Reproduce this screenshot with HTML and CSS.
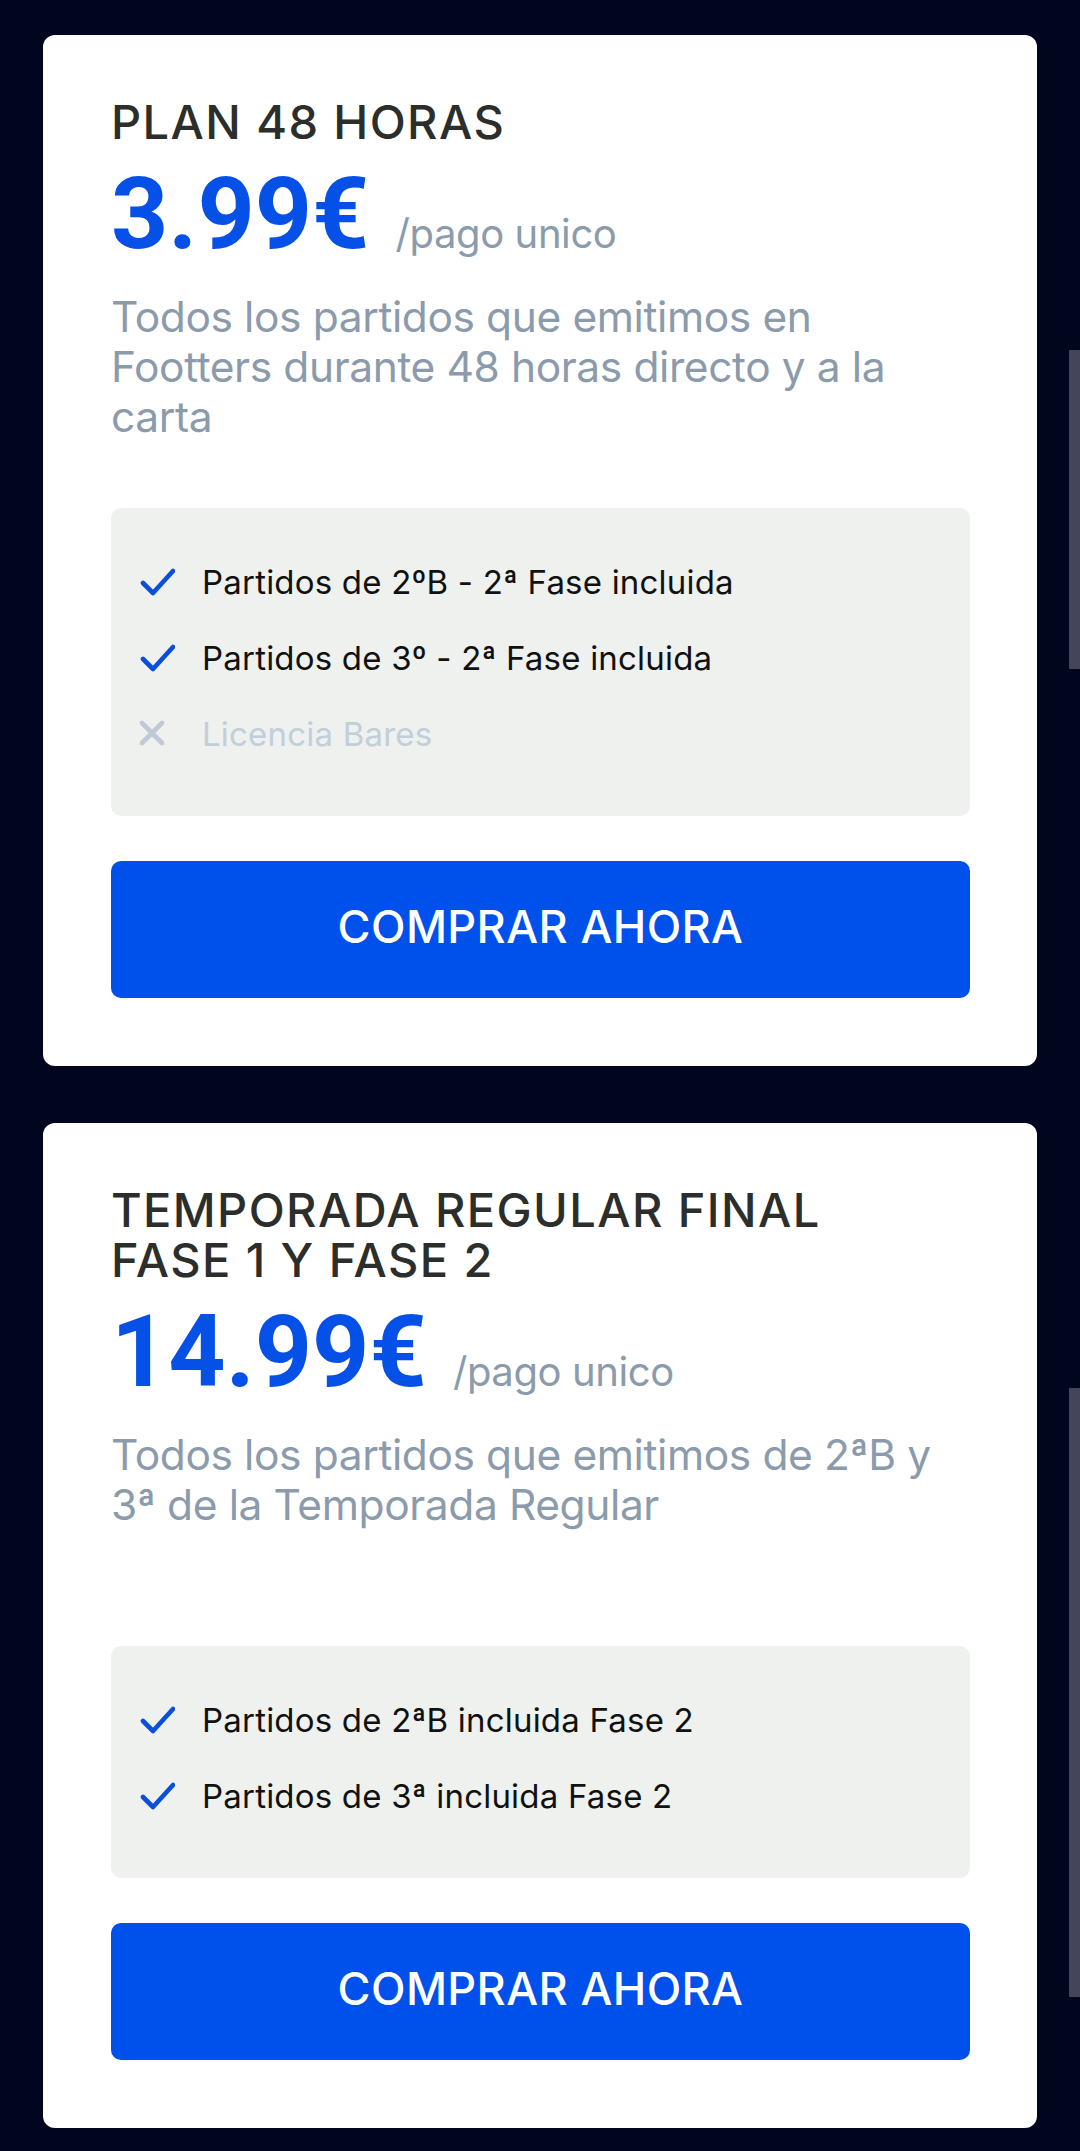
FILE: index.html
```html
<!DOCTYPE html>
<html lang="es">
<head>
<meta charset="utf-8">
<title>Planes</title>
<link rel="stylesheet" href="styles.css">
</head>
<body>
<main class="page">
  <section class="card">
    <h2 class="plan-title">PLAN 48 HORAS</h2>
    <div class="price-row">
      <span class="price">3.99€</span>
      <span class="period">/pago unico</span>
    </div>
    <p class="desc">Todos los partidos que emitimos en Footters durante 48 horas directo y a la carta</p>
    <ul class="features">
      <li class="feature">
        <svg class="ico" viewBox="0 0 36 30" width="36" height="30"><path d="M4 16 L14 26 L34 4" fill="none" stroke="#0a4fdc" stroke-width="4.6" stroke-linecap="round" stroke-linejoin="round"/></svg>
        <span>Partidos de 2ºB - 2ª Fase incluida</span>
      </li>
      <li class="feature">
        <svg class="ico" viewBox="0 0 36 30" width="36" height="30"><path d="M4 16 L14 26 L34 4" fill="none" stroke="#0a4fdc" stroke-width="4.6" stroke-linecap="round" stroke-linejoin="round"/></svg>
        <span>Partidos de 3º - 2ª Fase incluida</span>
      </li>
      <li class="feature off">
        <svg class="ico" viewBox="0 0 36 30" width="36" height="30"><path d="M3 4 L23 24 M23 4 L3 24" fill="none" stroke="#bfcad6" stroke-width="4.6" stroke-linecap="round"/></svg>
        <span>Licencia Bares</span>
      </li>
    </ul>
    <button class="buy">COMPRAR AHORA</button>
  </section>

  <section class="card">
    <h2 class="plan-title">TEMPORADA REGULAR FINAL FASE 1 Y FASE 2</h2>
    <div class="price-row">
      <span class="price">14.99€</span>
      <span class="period">/pago unico</span>
    </div>
    <p class="desc">Todos los partidos que emitimos de 2ªB y 3ª de la Temporada Regular</p>
    <ul class="features">
      <li class="feature">
        <svg class="ico" viewBox="0 0 36 30" width="36" height="30"><path d="M4 16 L14 26 L34 4" fill="none" stroke="#0a4fdc" stroke-width="4.6" stroke-linecap="round" stroke-linejoin="round"/></svg>
        <span>Partidos de 2ªB incluida Fase 2</span>
      </li>
      <li class="feature">
        <svg class="ico" viewBox="0 0 36 30" width="36" height="30"><path d="M4 16 L14 26 L34 4" fill="none" stroke="#0a4fdc" stroke-width="4.6" stroke-linecap="round" stroke-linejoin="round"/></svg>
        <span>Partidos de 3ª incluida Fase 2</span>
      </li>
    </ul>
    <button class="buy">COMPRAR AHORA</button>
  </section>

  <div class="scroll-thumb thumb-a"></div>
  <div class="scroll-thumb thumb-b"></div>
</main>
</body>
</html>
```

FILE: styles.css
```css
html, body {
  margin: 0;
  padding: 0;
  background: #01061f;
}
body {
  font-family: Inter, "Liberation Sans", sans-serif;
  min-height: 2151px;
}
.page {
  position: relative;
  display: flex;
  flex-direction: column;
  gap: 57px;
  padding: 35px 43px 21px;
}
.card {
  background: #ffffff;
  border-radius: 12px;
  padding: 62px 67px 68px 68px;
  display: flex;
  flex-direction: column;
}
.plan-title {
  margin: 0;
  font-size: 47px;
  line-height: 50px;
  font-weight: 500;
  color: #2c2e2c;
  max-width: 760px;
  letter-spacing: 1.4px;
}
.price-row {
  display: flex;
  align-items: baseline;
  gap: 26px;
  margin-top: 18px;
}
.price {
  font-family: Roboto, "Liberation Sans", sans-serif;
  font-weight: 700;
  font-size: 100px;
  line-height: 98px;
  color: #0550e6;
  letter-spacing: 0;
}
.period {
  font-size: 40px;
  color: #8b9bac;
  letter-spacing: -0.4px;
}
.desc {
  margin: 29px 0 0;
  font-size: 42.5px;
  line-height: 50px;
  min-height: 150px;
  color: #8b9bac;
  letter-spacing: -0.4px;
}
.features {
  list-style: none;
  margin: 66px 0 0;
  padding: 54px 28px 62px;
  background: #eef1ee;
  border-radius: 10px;
  display: flex;
  flex-direction: column;
  gap: 36px;
}
.feature {
  display: flex;
  align-items: center;
  gap: 27px;
  font-size: 33px;
  line-height: 40px;
  color: #111111;
  letter-spacing: 0.2px;
}
.feature.off {
  color: #c3cedb;
}
.ico {
  flex: none;
  display: block;
}
.buy {
  margin-top: 45px;
  height: 137px;
  padding: 0 0 6px;
  border: 0;
  border-radius: 10px;
  background: #0050eb;
  color: #ffffff;
  font-family: Inter, "Liberation Sans", sans-serif;
  font-size: 45px;
  font-weight: 500;
  letter-spacing: 0.4px;
  cursor: pointer;
}
.scroll-thumb {
  position: absolute;
  right: 0;
  width: 11px;
  background: #45455a;
}
.thumb-a {
  top: 350px;
  height: 319px;
}
.thumb-b {
  top: 1388px;
  height: 609px;
}
```
